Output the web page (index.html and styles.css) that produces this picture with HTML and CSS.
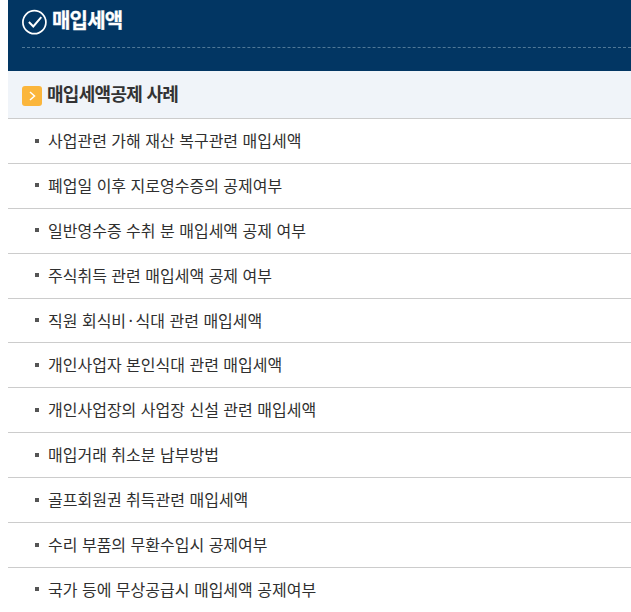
FILE: index.html
```html
<!DOCTYPE html>
<html lang="ko">
<head>
<meta charset="utf-8">
<title>매입세액</title>
<link rel="stylesheet" href="styles.css">
</head>
<body>
<main class="panel">
  <header class="hero">
    <div class="hero-title">
      <svg class="check" width="26" height="26" viewBox="0 0 26 26" fill="none" stroke="#fff" aria-hidden="true">
        <circle cx="12.4" cy="13.2" r="11.5" stroke-width="1.7"/>
        <path d="M6.9 13l4.4 4.5 8-9.3" stroke-width="2"/>
      </svg>
      <h1>매입세액</h1>
    </div>
  </header>
  <h2 class="section">
    <span class="badge"><svg width="20" height="20" viewBox="0 0 20 20" fill="none" stroke="#fff" stroke-width="1.5" aria-hidden="true"><path d="M8 6l4.5 4-4.5 4"/></svg></span>
    매입세액공제 사례
  </h2>
  <ul class="list">
    <li>사업관련 가해 재산 복구관련 매입세액</li>
    <li>폐업일 이후 지로영수증의 공제여부</li>
    <li>일반영수증 수취 분 매입세액 공제 여부</li>
    <li>주식취득 관련 매입세액 공제 여부</li>
    <li>직원 회식비<span class="dot">·</span>식대 관련 매입세액</li>
    <li>개인사업자 본인식대 관련 매입세액</li>
    <li>개인사업장의 사업장 신설 관련 매입세액</li>
    <li>매입거래 취소분 납부방법</li>
    <li>골프회원권 취득관련 매입세액</li>
    <li>수리 부품의 무환수입시 공제여부</li>
    <li>국가 등에 무상공급시 매입세액 공제여부</li>
  </ul>
</main>
</body>
</html>
```
FILE: styles.css
```css
html, body {
  margin: 0;
  padding: 0;
  height: 612px;
  overflow: hidden;
  background: #fff;
}
body {
  padding-left: 8px;
  font-family: "Noto Sans CJK KR", "Noto Sans", sans-serif;
}
.hero {
  height: 71px;
  background: #023663;
  padding: 0 0 0 14px;
  box-sizing: border-box;
}
.hero-title {
  height: 48px;
  box-sizing: border-box;
  border-bottom: 1px dashed #4f7897;
  display: flex;
  align-items: flex-start;
  gap: 4px;
  padding-top: 9px;
}
.check { flex: none; }
.hero h1 {
  margin: -1px 0 0;
  color: #fff;
  font-size: 20px;
  line-height: 24px;
  font-weight: 700;
  letter-spacing: -0.8px;
  -webkit-text-stroke: 0.3px #fff;
}
.section {
  margin: 0;
  height: 48px;
  box-sizing: border-box;
  background: #f0f4f9;
  border-bottom: 1px solid #ccc;
  padding: 0 0 4px 14px;
  display: flex;
  align-items: center;
  gap: 5px;
  color: #333;
  font-size: 18px;
  font-weight: 700;
  letter-spacing: -0.7px;
}
.badge {
  width: 20px;
  height: 20px;
  border-radius: 3px;
  background: #fbb63c;
  flex: none;
  margin-top: 7px;
}
.badge svg { display: block; }
.list {
  margin: 0;
  padding: 0;
  list-style: none;
}
.list li {
  height: 44.9px;
  box-sizing: border-box;
  border-bottom: 1px solid #ccc;
  padding-left: 40px;
  line-height: 43.9px;
  position: relative;
  color: #2f2f2f;
  font-size: 16px;
}
.list li::before {
  content: "";
  position: absolute;
  left: 27px;
  top: 19.5px;
  width: 4px;
  height: 4px;
  background: #555;
}
.dot { margin: 0 2.5px; }
```
